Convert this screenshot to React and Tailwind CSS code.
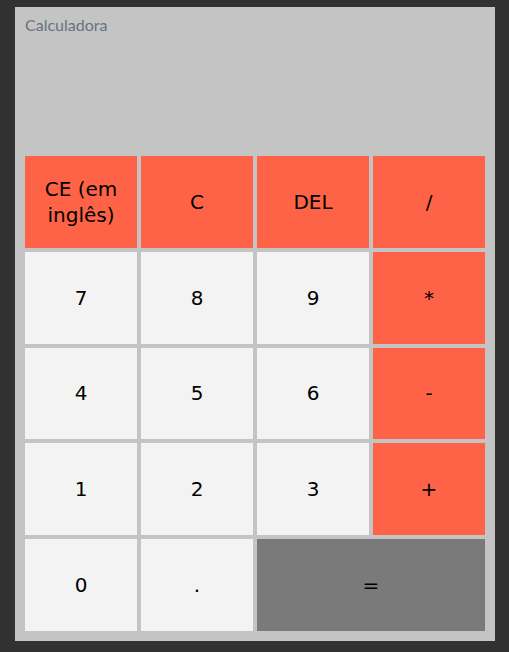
const keys = [
    { label: 'CE (em inglês)', kind: 'op' },
    { label: 'C', kind: 'op' },
    { label: 'DEL', kind: 'op' },
    { label: '/', kind: 'op' },
    { label: '7', kind: 'num' },
    { label: '8', kind: 'num' },
    { label: '9', kind: 'num' },
    { label: '*', kind: 'op' },
    { label: '4', kind: 'num' },
    { label: '5', kind: 'num' },
    { label: '6', kind: 'num' },
    { label: '-', kind: 'op' },
    { label: '1', kind: 'num' },
    { label: '2', kind: 'num' },
    { label: '3', kind: 'num' },
    { label: '+', kind: 'op' },
    { label: '0', kind: 'num' },
    { label: '.', kind: 'num' },
    { label: '=', kind: 'eq' },
];

const styles = {
    op: 'bg-[#ff6347]',
    num: 'bg-[#f3f3f3]',
    eq: 'bg-[#7a7a7a] col-span-2',
};

const App = () => {
    return (
        <div className="min-h-screen bg-[#313131] pt-[7px] pl-[15px] font-['DejaVu_Sans',sans-serif]">
            <div className="w-[480px] h-[634px] bg-[#c4c4c4] p-[10px] flex flex-col">
                {/* Display */}
                <div className="h-[139px] shrink-0">
                    <p className="font-['Lato',sans-serif] text-[16px] leading-[16px] text-[#687280]">Calculadora</p>
                </div>

                {/* Keypad */}
                <div className="grid grid-cols-4 grid-rows-5 gap-[4px] flex-1">
                    {keys.map((key) => (
                        <button
                            key={key.label}
                            className={`${styles[key.kind]} flex items-center justify-center px-2 text-[20px] leading-[26px] text-black text-center`}
                        >
                            {key.label}
                        </button>
                    ))}
                </div>
            </div>
        </div>
    );
};

export default App;
